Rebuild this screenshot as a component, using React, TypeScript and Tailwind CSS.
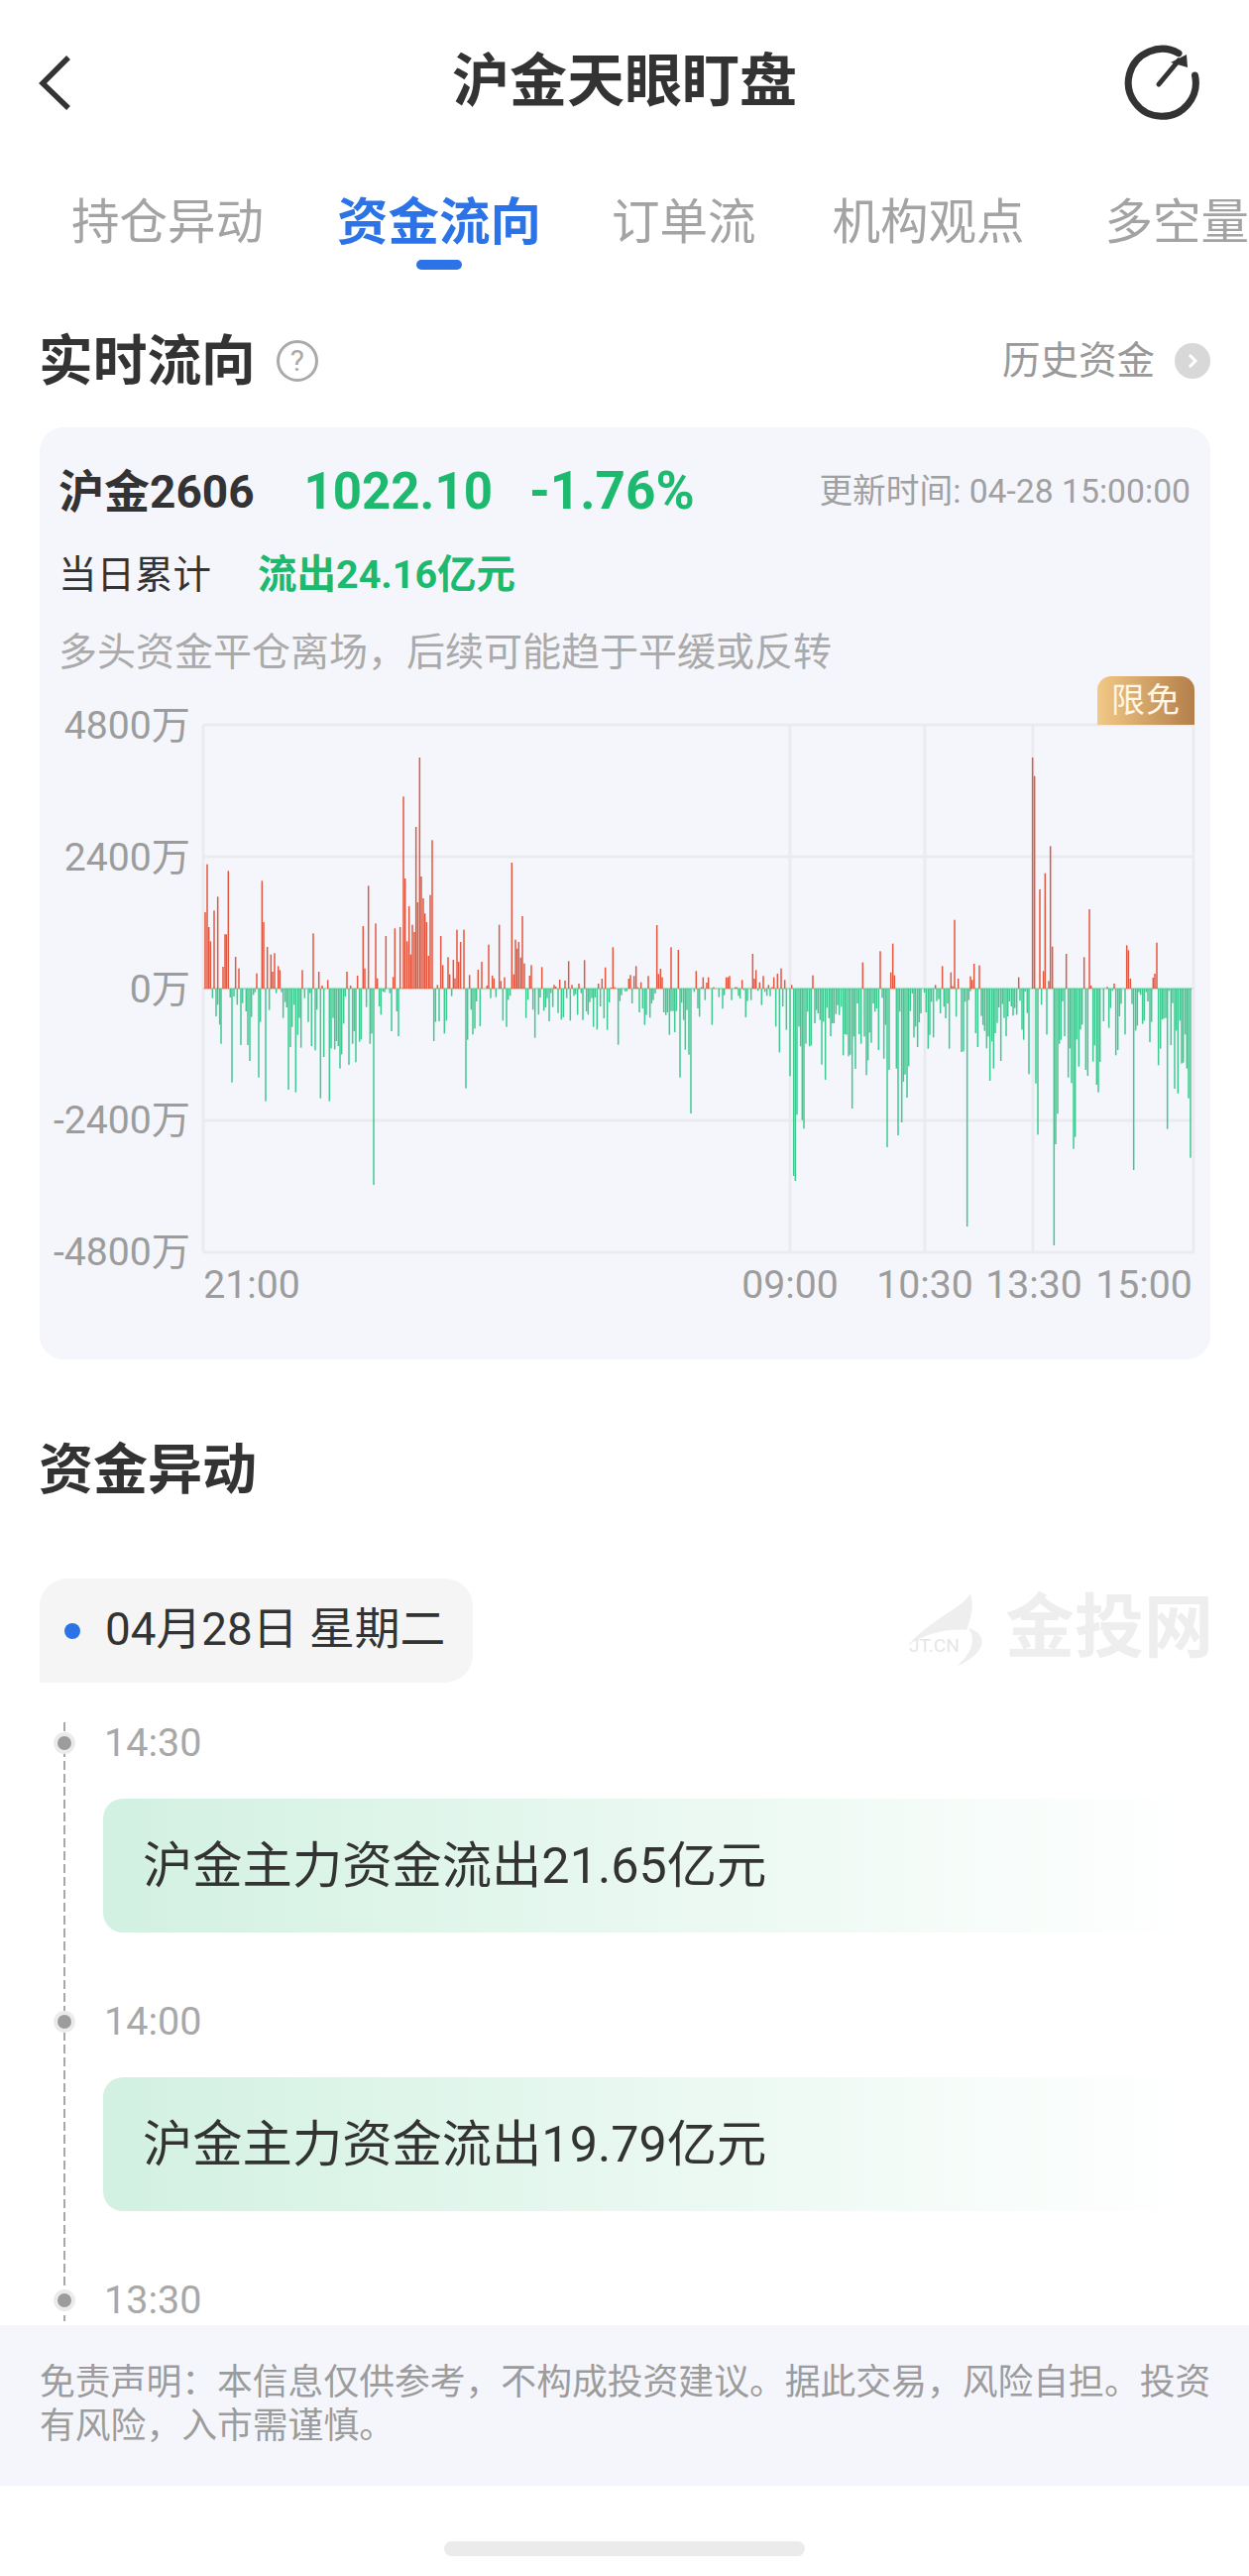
const RED = '#e2573f';
const GREEN = '#3fc88f';

// bars read off the reference, one block per strip of the plot: [x, y, x, y ...] in 3x strip pixels
const strips = [
  {
    x0: 205,
    zero: 711,
    red: [6,480,12,335,17,525,22,568,33,475,44,433,60,645,66,547,70,547,76,355,98,615,108,650,162,665,178,385,183,510,194,585,205,608,210,660,216,604,227,643,232,655,300,655,333,544,350,660,360,702,377,685,435,660,446,702,467,672,484,522,489,650,500,400,522,514,527,680,553,552,575,676,580,529,596,525],
    green: [28,740,39,795,44,760,50,820,54,878,82,738,87,995,93,735,103,760,114,882,119,755,130,780,135,882,141,930,146,797,152,730,157,722,168,980,173,812,189,1052,200,776,221,725,237,722,242,800,248,752,253,768,258,1017,264,888,269,827,275,760,280,1025,286,851,291,800,296,890,307,740,318,812,323,725,328,885,339,898,344,775,355,1043,365,918,382,1052,387,892,393,800,398,895,403,870,409,885,414,953,419,910,425,817,430,735,441,942,452,878,457,840,462,934,473,872,478,865,494,767,505,878,510,847,516,1305,533,765,538,790,544,720,549,722,565,725,570,840,586,780,591,855],
  },
  {
    x0: 405,
    zero: 711,
    red: [6,130,11,378,17,568,23,462,28,608,33,518,39,540,44,222,49,450,55,12,60,372,66,438,71,484,76,510,82,612,87,428,93,262,109,700,119,552,125,640,141,616,146,668,157,624,162,680,168,533,173,630,179,570,189,533,206,670,232,654,243,630,259,702,264,578,275,672,280,680,296,518,301,688,312,677,334,330,340,668,345,563,350,590,355,570,361,617,366,492,372,635,388,672,393,640,425,646,462,700,467,705,479,684,495,687,506,628,516,700,537,696,554,625,596,696],
    green: [98,870,103,812,114,810,130,847,136,808,152,734,195,1013,200,866,211,775,216,850,222,832,227,750,238,825,270,740,286,737,307,808,318,827,323,745,329,733,377,800,383,745,398,775,404,860,415,790,420,738,431,778,436,768,441,740,447,810,452,725,458,767,474,785,484,805,490,798,500,740,511,808,522,733,527,728,533,790,544,725,549,806,560,780,565,790,570,752,576,740,581,827,586,738,592,835],
  },
  {
    x0: 605,
    zero: 560,
    red: [7,530,17,496,34,557,40,435,45,556,88,530,93,519,104,522,110,492,115,556,125,541,147,522,173,368,178,516,184,500,189,526,216,435,238,443,292,507,308,556,313,526,324,542,329,526,345,556,383,526,388,526,393,522,410,556,415,556,431,534,463,455,468,530,473,504,484,541,495,522,511,549,522,556,527,526,538,515,549,499,560,534,581,549],
    green: [2,614,13,650,23,685,29,602,56,730,61,598,66,580,77,568,82,568,98,605,120,632,130,620,136,670,141,640,152,648,157,605,162,595,168,575,194,632,200,640,205,632,211,700,216,628,222,628,227,692,232,628,243,829,248,603,254,655,259,745,264,625,270,760,276,938,286,570,297,620,302,645,319,595,340,670,361,586,372,621,377,580,399,595,420,582,425,590,436,565,442,647,447,598,458,595,479,567,490,610,500,570,506,582,516,583,533,675,544,753,554,614,565,685,576,825,587,1127,592,1142,597,942],
  },
  {
    x0: 805,
    zero: 560,
    red: [45,520,196,481,249,447,281,511,287,424,292,520,416,549,437,492,463,511,468,553,474,352,485,530,522,523,527,534,533,485,549,490],
    green: [3,675,8,735,13,958,18,984,24,727,29,630,35,735,40,732,51,665,56,625,61,635,67,655,72,790,77,660,83,836,88,618,94,650,99,704,104,665,109,665,115,637,120,610,125,640,131,615,137,762,142,698,147,700,153,765,158,760,164,923,169,705,174,803,180,605,185,698,191,727,201,705,207,822,212,777,217,693,222,724,228,605,233,630,238,620,244,746,255,588,260,772,265,670,270,1040,276,806,298,802,303,1004,308,630,314,965,319,842,324,820,330,890,335,795,340,628,346,575,351,708,356,675,362,737,367,662,372,635,383,572,388,632,394,742,399,700,404,600,410,708,420,598,426,592,431,635,442,615,447,650,453,605,458,742,479,645,495,752,501,750,506,600,512,1280,517,595,522,568,538,695,544,737,555,643,560,670,565,688,571,741,576,705,581,839,587,720,592,802,597,695],
  },
  {
    x0: 1005,
    zero: 711,
    red: [68,677,110,12,116,68,132,411,143,658,148,362,159,688,164,280,170,584,212,606,266,616,282,471,287,702,336,706,357,696,395,580,400,595,406,681,475,678,480,666,486,572],
    green: [3,815,8,768,14,930,19,758,24,800,30,855,35,795,40,750,46,765,51,793,56,770,62,790,72,748,78,835,83,866,88,720,94,785,99,970,120,998,126,1153,137,760,153,850,175,1488,180,1182,186,1090,191,878,196,866,201,750,207,855,218,980,223,892,228,997,234,1196,239,1160,244,865,250,947,255,835,260,820,271,957,277,975,293,932,298,883,304,1002,309,1025,314,933,325,810,341,830,346,770,352,718,362,913,368,897,373,795,378,757,390,850,411,758,416,1260,422,838,427,823,432,722,437,730,443,818,448,808,454,722,459,750,465,873,470,812,491,943,497,893,502,805,507,802,513,800,518,1136,523,718,529,882,534,755,540,1014,545,838,550,1028,556,808,561,938,566,935,572,850,577,953,582,1043,588,1223],
  },
];

function pairs(list: number[]) {
  const out: [number, number][] = [];
  for (let i = 0; i < list.length; i += 2) out.push([list[i], list[i + 1]]);
  return out;
}

function FlowChart() {
  // svg origin sits at page (203, 729), zero line at page y 997
  const zeroY = 268;
  return (
    <svg width="1003" height="536" viewBox="0 0 1003 536" className="shrink-0">
      {[2, 135, 268, 401, 534].map((y) => (
        <line key={y} x1="2" x2="1002" y1={y} y2={y} stroke="#ebebef" strokeWidth="3" />
      ))}
      {[2, 594, 730, 839, 1001].map((x) => (
        <line key={x} x1={x} x2={x} y1="2" y2="534" stroke="#ebebef" strokeWidth="3" />
      ))}
      <line x1="2" x2="1000" y1={zeroY} y2={zeroY} stroke="#8be6bf" strokeWidth="1.5" />
      {strips.map((s) => (
        <g key={s.x0}>
          {pairs(s.green).map(([x, y]) => (
            <rect key={x} x={s.x0 - 203 + x / 3 - 0.75} y={zeroY} width="1.5" height={(y - s.zero) / 3} fill={GREEN} />
          ))}
          {pairs(s.red).map(([x, y]) => (
            <rect key={x} x={s.x0 - 203 + x / 3 - 0.75} y={zeroY - (s.zero - y) / 3} width="1.5" height={(s.zero - y) / 3} fill={RED} />
          ))}
        </g>
      ))}
    </svg>
  );
}

function TimelineItem({ time, text }: { time: string; text?: string }) {
  return (
    <div className="mb-[65px]">
      <div className="flex items-center h-[50px] pl-[105px] relative">
        <span className="absolute left-[54px] top-[14px] w-[22px] h-[22px] rounded-full bg-[#ebebeb] flex items-center justify-center">
          <span className="w-[14px] h-[14px] rounded-full bg-[#9c9c9c]" />
        </span>
        <span className="text-[39.5px] text-[#a8a8a8]">{time}</span>
      </div>
      {text && (
        <div className="mt-[31px] ml-[104px] w-[1103px] h-[135px] rounded-l-[20px] bg-gradient-to-r from-[#d2f1e2] to-white flex items-center pl-[40px] text-[50.3px] text-[#333]">
          {text}
        </div>
      )}
    </div>
  );
}

export default function App() {
  return (
    <div className="w-[1260px] h-[2598px] overflow-hidden bg-white font-['Roboto','Noto_Sans_CJK_SC',sans-serif]">
      <header className="h-[160px] flex items-center pl-[36px] pr-[36px]">
        <div className="flex-1">
          <svg width="40" height="60" viewBox="0 0 40 60" className="mt-[5px]">
            <polyline points="33,5 7,31 33,56" fill="none" stroke="#333" strokeWidth="5.5" />
          </svg>
        </div>
        <h1 className="text-[58px] leading-none font-bold text-[#333] mt-[3px]">沪金天眼盯盘</h1>
        <div className="flex-1 flex justify-end">
          <svg width="80" height="80" viewBox="0 0 80 80" className="mt-[5px] mr-[12px]">
            <path d="M57 10.7A34 34 0 1 0 73.5 33" fill="none" stroke="#333" strokeWidth="7" strokeLinecap="round" />
            <line x1="37" y1="42" x2="57" y2="18" stroke="#333" strokeWidth="5" strokeLinecap="round" />
            <polygon points="65,12 49,20 66,25" fill="#333" />
          </svg>
        </div>
      </header>

      <nav className="mt-[35px] flex items-start whitespace-nowrap pl-[72px] text-[48.5px] leading-[60px] text-[#a3a3a3]">
        <span>持仓异动</span>
        <div className="ml-[74px] flex flex-col items-center">
          <span className="text-[51.5px] font-bold text-[#2b73e6]">资金流向</span>
          <span className="mt-[7px] w-[46px] h-[10px] rounded-full bg-[#2b73e6]" />
        </div>
        <span className="ml-[71px]">订单流</span>
        <span className="ml-[77px]">机构观点</span>
        <span className="ml-[81px]">多空量</span>
      </nav>

      <section className="mt-[57px] h-[70px] flex items-center pl-[39px] pr-[39px]">
        <h2 className="text-[54.7px] font-bold text-[#333]">实时流向</h2>
        <span className="ml-[21px] w-[42px] h-[42px] rounded-full border-[3px] border-[#aaa] text-[#aaa] text-[30px] leading-none flex items-center justify-center">
          ?
        </span>
        <span className="ml-auto text-[38.5px] text-[#999]">历史资金</span>
        <span className="ml-[20px] w-[36px] h-[36px] rounded-full bg-[#d8d8d8] flex items-center justify-center">
          <svg width="12" height="18" viewBox="0 0 12 18">
            <polyline points="3,3 9,9 3,15" fill="none" stroke="#fff" strokeWidth="3" />
          </svg>
        </span>
      </section>

      <section className="relative mt-[32px] ml-[40px] w-[1181px] h-[940px] rounded-[24px] bg-[#f5f6fc] pt-[35px]">
        <div className="h-[60px] flex items-center pl-[19px] pr-[20px]">
          <span className="text-[46px] font-bold text-[#333]">沪金2606</span>
          <span className="ml-[50px] text-[51px] font-bold text-[#1cb96f]">1022.10</span>
          <span className="ml-[37px] text-[53px] font-bold text-[#1cb96f]">-1.76%</span>
          <span className="ml-auto text-[33.7px] text-[#a0a0a0]">更新时间: 04-28 15:00:00</span>
        </div>
        <div className="mt-[29px] h-[50px] flex items-center pl-[19px] text-[38.5px]">
          <span className="text-[#333]">当日累计</span>
          <span className="ml-[47px] text-[39.5px] font-bold text-[#1cb96f]">流出24.16亿元</span>
        </div>
        <div className="mt-[28px] h-[50px] flex items-center pl-[19px] text-[39px] text-[#aaa]">
          多头资金平仓离场，后续可能趋于平缓或反转
        </div>

        <span className="absolute top-[251px] right-[16px] w-[98px] h-[49px] rounded-t-[14px] bg-gradient-to-r from-[#f2c986] to-[#b47f4b] text-[34px] tracking-[1px] text-[#fff6e6] flex items-center justify-center">
          限免
        </span>

        <div className="mt-[24px] h-[581px] flex items-start">
          <div className="w-[152px] h-[581px] flex flex-col justify-between text-right text-[39.2px] leading-[50px] text-[#9c9c9c]">
            <span>4800万</span>
            <span>2400万</span>
            <span>0万</span>
            <span>-2400万</span>
            <span>-4800万</span>
          </div>
          <div className="ml-[11px] mt-[22px]">
            <FlowChart />
          </div>
        </div>
        <div className="-mt-[17px] h-[50px] flex items-center ml-[165px] text-[39.2px] text-[#9c9c9c] text-center">
          <span className="w-[98px]">21:00</span>
          <span className="w-[98px] ml-[445px]">09:00</span>
          <span className="w-[98px] ml-[38px]">10:30</span>
          <span className="w-[98px] ml-[12px]">13:30</span>
          <span className="w-[98px] ml-[13px]">15:00</span>
        </div>
      </section>

      <h2 className="mt-[76px] ml-[39px] h-[70px] flex items-center text-[55px] font-bold text-[#333]">资金异动</h2>

      <div className="mt-[75px] ml-[40px] mr-[36px] h-[105px] flex items-start justify-between">
        <div className="w-[437px] h-[105px] bg-[#f5f5f5] rounded-t-[28px] rounded-br-[28px] flex items-center pl-[25px]">
          <span className="w-[16px] h-[16px] rounded-full bg-[#2b73e6]" />
          <span className="ml-[25px] text-[45.8px] text-[#333] whitespace-nowrap">04月28日 星期二</span>
        </div>
        <div className="flex items-start mt-[14px]">
          <svg width="84" height="76" viewBox="0 0 84 76">
            <path d="M66 1C58 16 30 24 2 54C20 42 42 36 62 38C66 28 70 14 66 1Z" fill="#eeeeee" />
            <path d="M64 36C80 40 88 58 52 75C68 60 72 48 64 36Z" fill="#eeeeee" />
            <text x="4" y="60" fontSize="19" fontFamily="Roboto, sans-serif" fill="#e6e6e6">JT.CN</text>
          </svg>
          <span className="ml-[17px] text-[70px] leading-[72px] font-bold text-[#eeeeee] whitespace-nowrap">金投网</span>
        </div>
      </div>

      <div className="relative h-[648px] overflow-hidden pt-[36px]">
        <span className="absolute left-[64px] top-[40px] bottom-[4px] w-[2px] bg-[repeating-linear-gradient(to_bottom,#a8a8a8_0,#a8a8a8_9px,transparent_9px,transparent_13px)]" />
        <TimelineItem time="14:30" text="沪金主力资金流出21.65亿元" />
        <TimelineItem time="14:00" text="沪金主力资金流出19.79亿元" />
        <TimelineItem time="13:30" />
      </div>

      <footer className="h-[162px] bg-[#f5f6fc] pt-[36px] pl-[40px] pr-[30px] text-[35.8px] leading-[44px] text-[#9c9c9c]">
        免责声明：本信息仅供参考，不构成投资建议。据此交易，风险自担。投资有风险，入市需谨慎。
      </footer>

      <div className="mt-[56px] mx-auto w-[364px] h-[15px] rounded-full bg-[#ebebeb]" />
    </div>
  );
}
